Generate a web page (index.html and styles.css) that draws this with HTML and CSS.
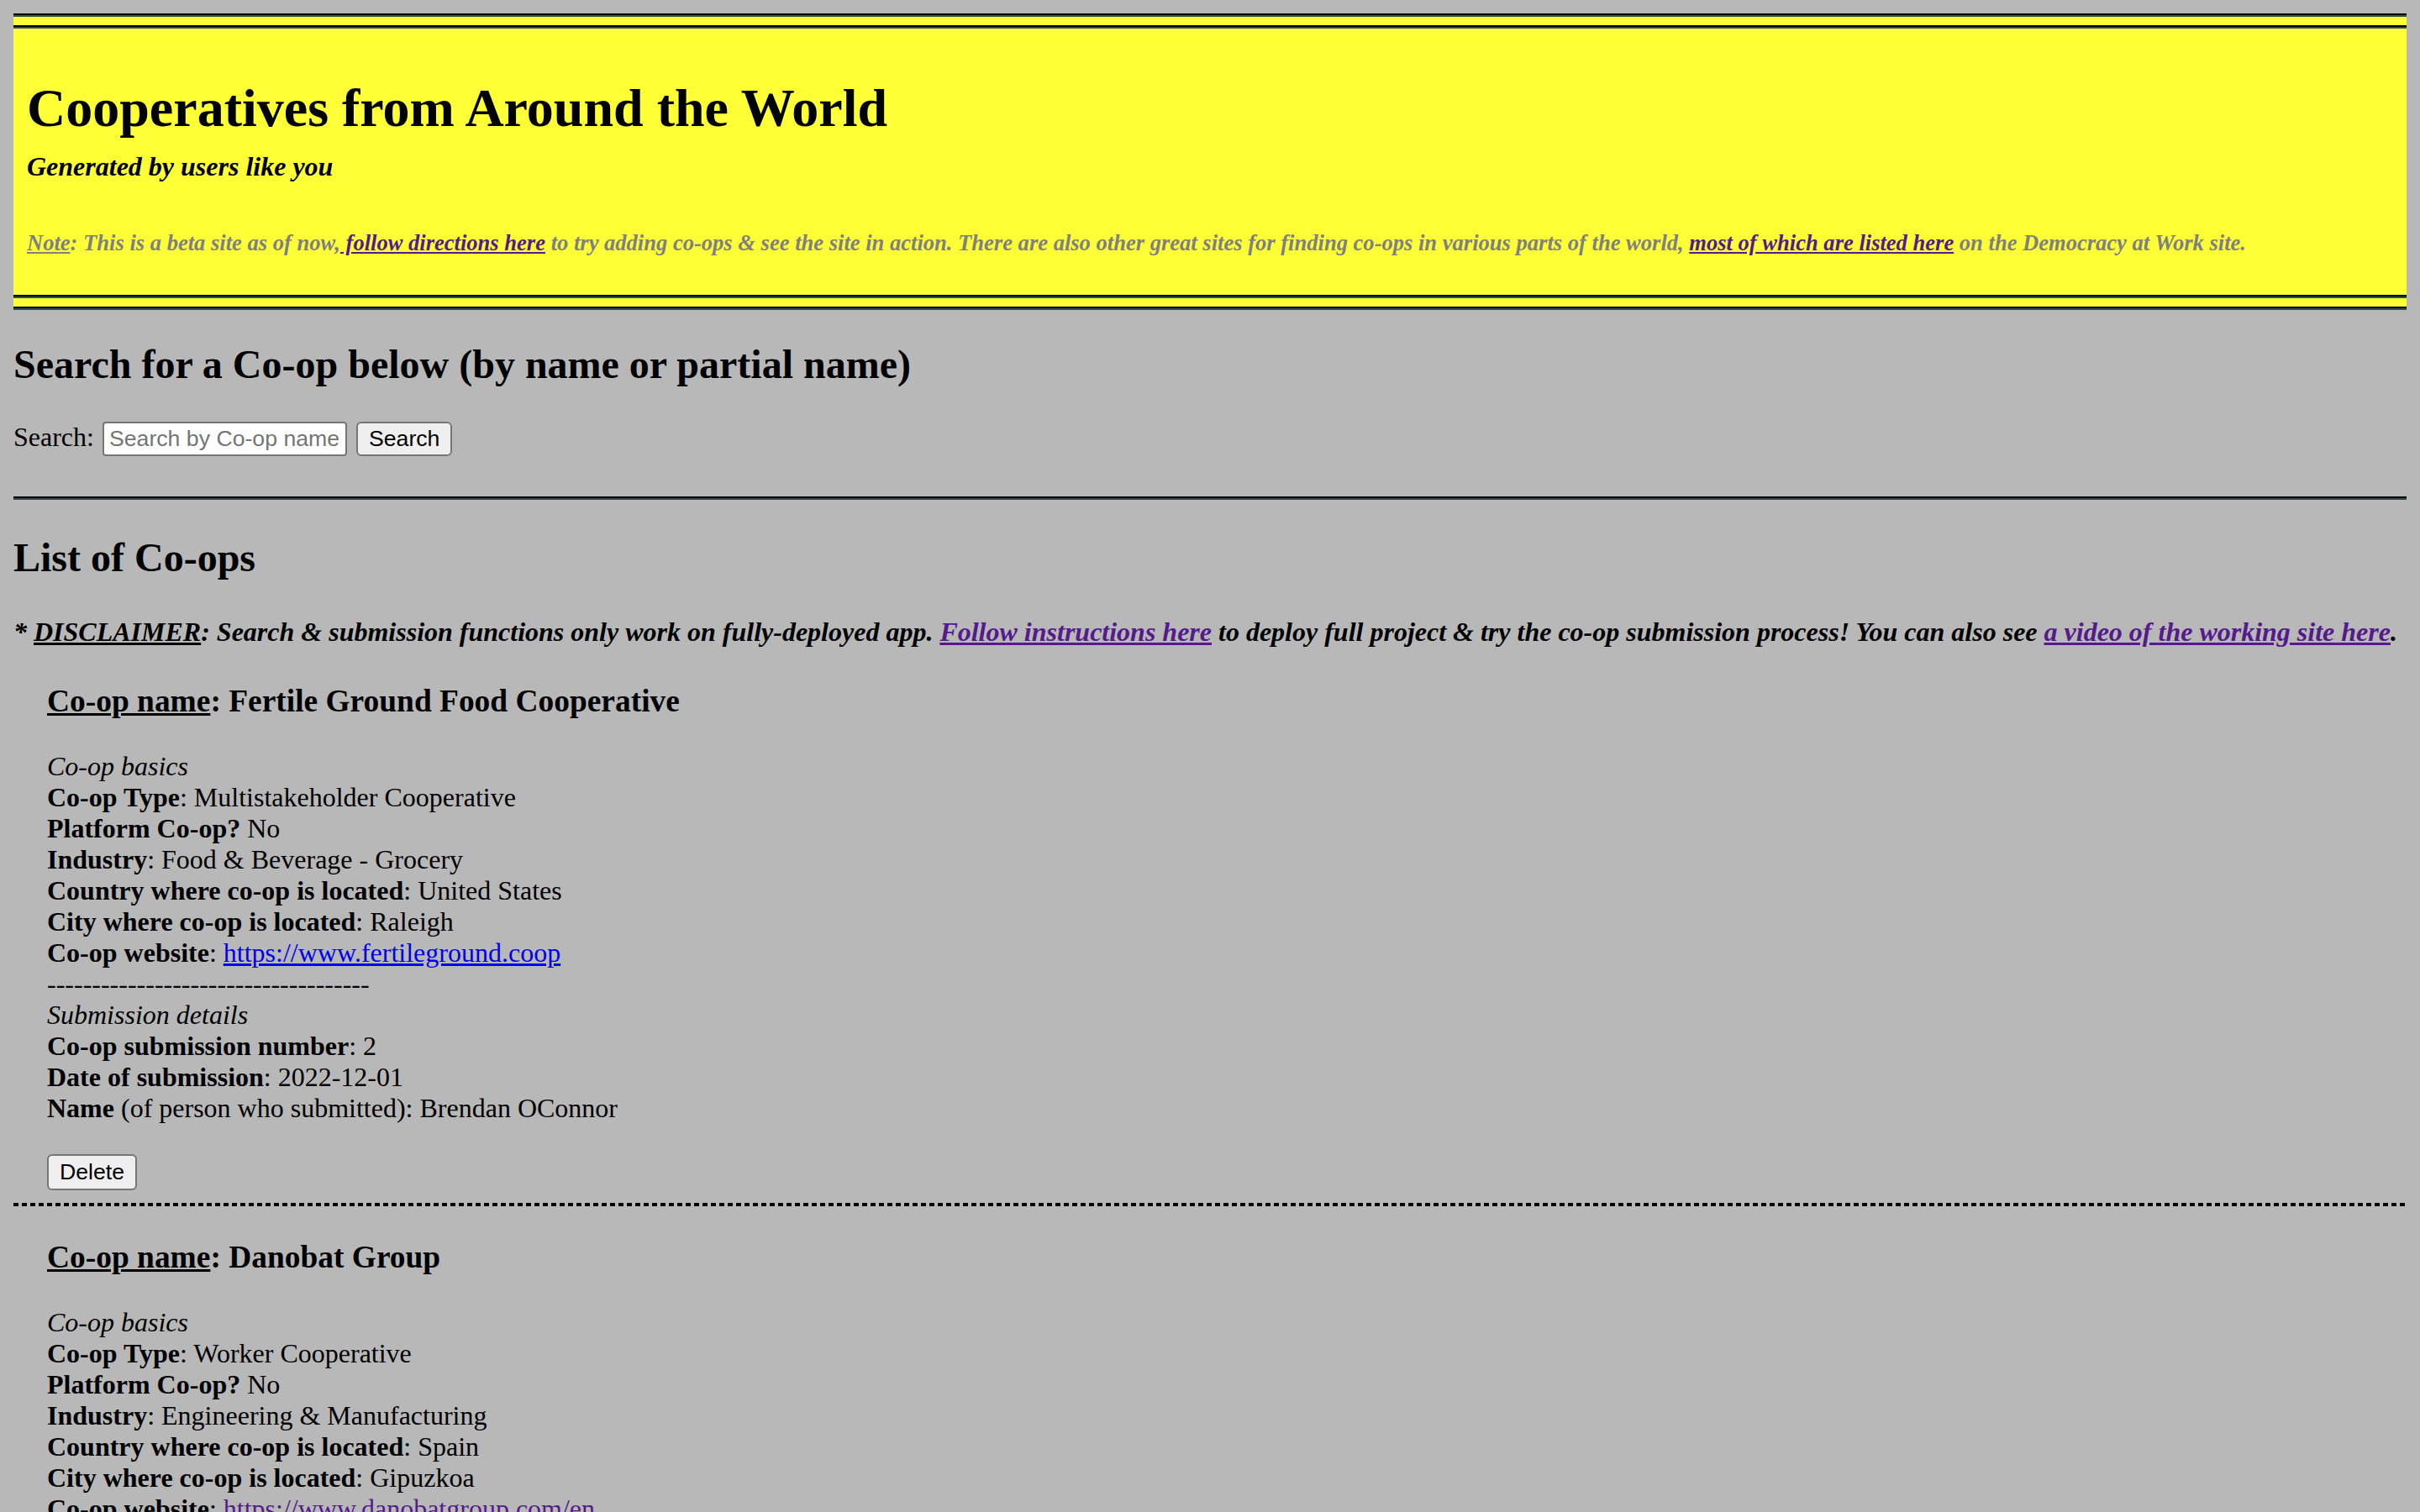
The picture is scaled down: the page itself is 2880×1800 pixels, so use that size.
FILE: index.html
```html
<!DOCTYPE html>
<html lang="en">
<head>
<meta charset="utf-8">
<title>Cooperatives from Around the World</title>
<link rel="stylesheet" href="styles.css">
</head>
<body>
<header class="banner">
  <div class="rule-pair">
    <div class="rule"></div>
    <div class="rule"></div>
  </div>
  <div class="banner-body">
    <h1 class="title">Cooperatives from Around the World</h1>
    <h4 class="subtitle">Generated by users like you</h4>
    <h5 class="note"><u>Note</u>: This is a beta site as of now,<a class="visited" href="#"> follow directions here</a> to try adding co-ops &amp; see the site in action. There are also other great sites for finding co-ops in various parts of the world, <a class="visited" href="#">most of which are listed here</a> on the Democracy at Work site.</h5>
  </div>
  <div class="rule-pair">
    <div class="rule"></div>
    <div class="rule"></div>
  </div>
</header>

<h2 class="search-title">Search for a Co-op below (by name or partial name)</h2>
<form class="search-form">
  <label class="search-label" for="q">Search:</label>
  <input class="search-input" id="q" type="text" placeholder="Search by Co-op name">
  <button class="btn search-btn" type="button">Search</button>
</form>
<div class="rule wide"></div>

<h2 class="list-title">List of Co-ops</h2>
<h4 class="disclaimer">* <u>DISCLAIMER</u>: Search &amp; submission functions only work on fully-deployed app. <a class="visited" href="#">Follow instructions here</a> to deploy full project &amp; try the co-op submission process! You can also see <a class="visited" href="#">a video of the working site here</a>.</h4>

<section class="coop">
  <h3 class="coop-name"><u>Co-op name</u>: Fertile Ground Food Cooperative</h3>
  <div class="details">
    <div class="field"><i>Co-op basics</i></div>
    <div class="field"><b>Co-op Type</b>: Multistakeholder Cooperative</div>
    <div class="field"><b>Platform Co-op?</b> No</div>
    <div class="field"><b>Industry</b>: Food &amp; Beverage - Grocery</div>
    <div class="field"><b>Country where co-op is located</b>: United States</div>
    <div class="field"><b>City where co-op is located</b>: Raleigh</div>
    <div class="field"><b>Co-op website</b>: <a class="link" href="#">https://www.fertileground.coop</a></div>
    <div class="field">------------------------------------</div>
    <div class="field"><i>Submission details</i></div>
    <div class="field"><b>Co-op submission number</b>: 2</div>
    <div class="field"><b>Date of submission</b>: 2022-12-01</div>
    <div class="field"><b>Name</b> (of person who submitted): Brendan OConnor</div>
  </div>
  <div class="actions">
    <button class="btn delete-btn" type="button">Delete</button>
  </div>
</section>

<section class="coop">
  <h3 class="coop-name"><u>Co-op name</u>: Danobat Group</h3>
  <div class="details">
    <div class="field"><i>Co-op basics</i></div>
    <div class="field"><b>Co-op Type</b>: Worker Cooperative</div>
    <div class="field"><b>Platform Co-op?</b> No</div>
    <div class="field"><b>Industry</b>: Engineering &amp; Manufacturing</div>
    <div class="field"><b>Country where co-op is located</b>: Spain</div>
    <div class="field"><b>City where co-op is located</b>: Gipuzkoa</div>
    <div class="field"><b>Co-op website</b>: <a class="visited" href="#">https://www.danobatgroup.com/en</a></div>
    <div class="field">------------------------------------</div>
    <div class="field"><i>Submission details</i></div>
    <div class="field"><b>Co-op submission number</b>: 3</div>
    <div class="field"><b>Date of submission</b>: 2022-12-01</div>
    <div class="field"><b>Name</b> (of person who submitted): Brendan OConnor</div>
  </div>
  <div class="actions">
    <button class="btn delete-btn" type="button">Delete</button>
  </div>
</section>
</body>
</html>
```

FILE: styles.css
```css
html {
  background: #b8b8b8;
}

body {
  margin: 16px;
  background: #b8b8b8;
  color: #000;
  font-family: "Liberation Serif", "Times New Roman", Times, serif;
  font-size: 32px;
  line-height: normal;
}

a.visited {
  color: #551a8b;
}

a.link {
  color: #0000ee;
}

/* ---------- banner ---------- */
.banner {
  background: #ffff38;
  margin-right: -16px;
}

.rule-pair {
  display: flex;
  flex-direction: column;
  gap: 10px;
}

.rule {
  height: 2px;
  background: #000;
  border-bottom: 2px solid #2f4f4f;
}

.rule.wide {
  margin: 0 -16px 0 0;
}

.banner-body {
  padding: 0 16px;
}

.title {
  font-size: 64px;
  font-weight: bold;
  margin: 58px 0 0;
}

.subtitle {
  font-size: 32px;
  font-weight: bold;
  font-style: italic;
  margin: 14px 0 0;
}

.note {
  font-size: 26.56px;
  font-weight: bold;
  font-style: italic;
  color: #808080;
  white-space: nowrap;
  margin: 57px 0 46px;
}

/* ---------- search ---------- */
.search-title {
  font-size: 48px;
  font-weight: bold;
  margin: 36.5px 0 41px;
}

.search-form {
  display: flex;
  align-items: center;
  height: 41px;
  margin: 0 0 48px;
}

.search-label {
  font-size: 32px;
  margin-bottom: 4px;
}

.search-input {
  box-sizing: border-box;
  width: 291px;
  height: 41px;
  margin: 0 0 0 10px;
  padding: 0 6px;
  border: 2px solid #767676;
  border-radius: 4px;
  background: #fff;
  font-family: "Liberation Sans", Arial, Helvetica, sans-serif;
  font-size: 26.67px;
  color: #000;
}

.search-input::placeholder {
  color: #757575;
}

.btn {
  box-sizing: border-box;
  height: 43px;
  padding: 0 14px;
  border: 2px solid #767676;
  border-radius: 6px;
  background: #efefef;
  color: #000;
  font-family: "Liberation Sans", Arial, Helvetica, sans-serif;
  font-size: 26.67px;
}

.search-btn {
  height: 41px;
  margin-left: 11px;
  padding: 0 13px;
}

/* ---------- list ---------- */
.list-title {
  font-size: 48px;
  font-weight: bold;
  margin: 41.8px 0 39.8px;
}

.disclaimer {
  font-size: 32px;
  font-weight: bold;
  font-style: italic;
  white-space: nowrap;
  margin: 42.56px 0;
}

.coop {
  padding: 0 40px 19px;
  background-image: repeating-linear-gradient(to right, #000 0, #000 6px, transparent 6px, transparent 10px);
  background-size: 100% 4px;
  background-position: left bottom;
  background-repeat: no-repeat;
}

.coop-name {
  font-size: 37.44px;
  font-weight: bold;
  margin: 37.44px 0;
}

.coop + .coop .coop-name {
  margin-top: 39.5px;
}

.details {
  font-size: 32px;
}

.actions {
  display: flex;
  margin-top: 36px;
}

.delete-btn {
  width: 107px;
  padding: 0;
}
```
